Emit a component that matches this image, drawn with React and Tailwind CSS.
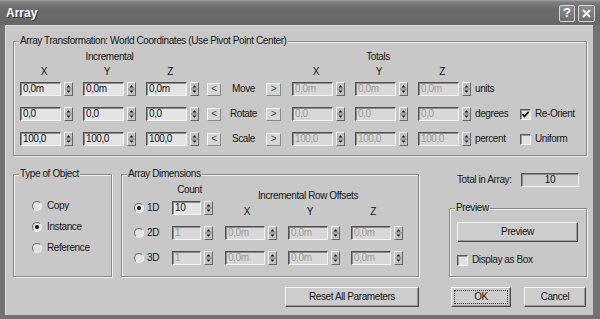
import React from "react";

function Field({ value, w, disabled, center }) {
  return (
    <div
      className={`${w} h-[14px] shrink-0 flex items-center overflow-hidden whitespace-nowrap border border-t-[#505050] border-l-[#505050] border-b-[#f4f4f4] border-r-[#f4f4f4] shadow-[inset_1px_1px_0_#8c8c8c] ${
        center ? "justify-center" : "pl-[2px]"
      } ${disabled ? "bg-[#d8d8d8] text-[#9a9a9a]" : "bg-[#e4e4e4] text-[#111]"}`}
    >
      {value}
    </div>
  );
}

function Spin() {
  return (
    <div className="ml-[3px] w-[9px] h-[14px] shrink-0 bg-[#c2c2c2] border border-t-[#f0f0f0] border-l-[#f0f0f0] border-b-[#666] border-r-[#666]">
      <svg width="7" height="12" viewBox="0 0 7 12" className="block">
        <path d="M1.5 4.6 L3.5 2.2 L5.5 4.6Z" fill="#111" />
        <line x1="0" y1="6" x2="7" y2="6" stroke="#808080" strokeWidth="1" />
        <path d="M1.5 7.4 L5.5 7.4 L3.5 9.8Z" fill="#111" />
      </svg>
    </div>
  );
}

function Unit({ value, disabled, w = "w-[41px]", className = "" }) {
  return (
    <div className={`flex items-center shrink-0 ${className}`}>
      <Field value={value} w={w} disabled={disabled} />
      <Spin />
    </div>
  );
}

function Radio({ checked }) {
  return (
    <div className="w-[10px] h-[10px] shrink-0 rounded-full bg-[#e2e2e2] border border-t-[#6a6a6a] border-l-[#6a6a6a] border-b-[#f6f6f6] border-r-[#f6f6f6] flex items-center justify-center">
      {checked && <div className="w-[4px] h-[4px] rounded-full bg-[#111]" />}
    </div>
  );
}

function Check({ checked }) {
  return (
    <div className="w-[11px] h-[11px] shrink-0 bg-[#e2e2e2] border border-t-[#5a5a5a] border-l-[#5a5a5a] border-b-[#f6f6f6] border-r-[#f6f6f6] shadow-[inset_1px_1px_0_#9a9a9a]">
      {checked && (
        <svg width="9" height="9" viewBox="0 0 9 9" className="block">
          <path d="M1.5 4.2 L3.5 6.4 L7.6 1.8" fill="none" stroke="#111" strokeWidth="1.7" />
        </svg>
      )}
    </div>
  );
}

function Group({ label, className = "", children }) {
  return (
    <div
      className={`relative shrink-0 border border-[#8a8a8a] shadow-[inset_1px_1px_0_#efefef,1px_1px_0_#efefef] ${className}`}
    >
      <span className="absolute -top-[7px] left-[5px] px-[1px] bg-[#c8c8c8] leading-[12px] whitespace-nowrap">
        {label}
      </span>
      {children}
    </div>
  );
}

function ArrowBtn({ children, className = "" }) {
  return (
    <div
      className={`h-[13px] shrink-0 flex items-center justify-center bg-[#d6d6d6] text-[#444] text-[10px] border border-t-[#f2f2f2] border-l-[#f2f2f2] border-b-[#8a8a8a] border-r-[#8a8a8a] ${className}`}
    >
      {children}
    </div>
  );
}

function PushBtn({ children, className = "", focus }) {
  return (
    <div
      className={`shrink-0 flex bg-[#cdcdcd] border border-t-[#f4f4f4] border-l-[#f4f4f4] border-b-[#4a4a4a] border-r-[#4a4a4a] shadow-[inset_-1px_-1px_0_#9a9a9a] ${
        focus ? "p-[2px]" : ""
      } ${className}`}
    >
      <div
        className={`flex-1 flex items-center justify-center ${
          focus ? "border border-dotted border-[#333]" : ""
        }`}
      >
        {children}
      </div>
    </div>
  );
}

function TRow({ inc, tot, label, unit, check, className = "" }) {
  return (
    <div className={`flex items-center h-[14px] ${className}`}>
      <Unit value={inc} />
      <Unit value={inc} className="ml-[10px]" />
      <Unit value={inc} className="ml-[10px]" />
      <ArrowBtn className="ml-[8px] w-[14px]">&lt;</ArrowBtn>
      <div className="w-[45px] text-center">{label}</div>
      <ArrowBtn className="w-[15px]">&gt;</ArrowBtn>
      <Unit value={tot} disabled className="ml-[11px]" />
      <Unit value={tot} disabled className="ml-[10px]" />
      <Unit value={tot} disabled className="ml-[10px]" />
      <div className="ml-[4px] w-[45px]">{unit}</div>
      {check}
    </div>
  );
}

function Letter({ children, className = "", w = "w-[48px]" }) {
  return (
    <div className={`w-[53px] shrink-0 flex ${className}`}>
      <div className={`${w} text-center`}>{children}</div>
    </div>
  );
}

export default function App() {
  return (
    <div className="w-[600px] h-[319px] flex flex-col bg-[#727272] font-['Liberation_Sans',Arial,sans-serif] text-[10px] tracking-[-0.4px] leading-[12px] text-[#161616] overflow-hidden">
      {/* Title bar */}
      <div className="h-[25px] shrink-0 flex items-center pl-[6px] pr-[5px] bg-[linear-gradient(#a2a2a2_0px,#7e7e7e_2px,#6c6c6c_9px,#676767_25px)]">
        <span className="text-white font-bold text-[12px] tracking-normal [text-shadow:1px_1px_0_#333]">
          Array
        </span>
        <div className="ml-auto flex gap-[3px] pt-[1px]">
          <div className="w-[16px] h-[17px] rounded-[2px] border border-[#d6d6d6] bg-[linear-gradient(#8e8e8e,#6e6e6e)] flex items-center justify-center text-white font-bold text-[13px] tracking-normal">
            ?
          </div>
          <div className="w-[17px] h-[17px] rounded-[2px] border border-[#d6d6d6] bg-[linear-gradient(#8e8e8e,#6e6e6e)] flex items-center justify-center">
            <svg width="9" height="9" viewBox="0 0 9 9">
              <path d="M1 1 L8 8 M8 1 L1 8" stroke="#fff" strokeWidth="1.8" />
            </svg>
          </div>
        </div>
      </div>

      {/* Body */}
      <div className="flex-1 flex flex-col ml-[5px] mr-[7px] mb-[4px] bg-[#c8c8c8] pl-[8px] pr-[6px] pt-[16px] shadow-[inset_1px_1px_0_#dcdcdc]">
        {/* Array Transformation */}
        <Group
          label="Array Transformation: World Coordinates (Use Pivot Point Center)"
          className="h-[115px] pl-[6px] pt-[9px]"
        >
          <div className="flex h-[12px]">
            <div className="w-[63px] shrink-0" />
            <div className="w-[53px] shrink-0 flex justify-center whitespace-nowrap">Incremental</div>
            <div className="w-[219px] shrink-0" />
            <div className="w-[46px] shrink-0 flex justify-center">Totals</div>
          </div>
          <div className="flex h-[12px] mt-[3px]">
            <Letter>X</Letter>
            <Letter className="ml-[10px]">Y</Letter>
            <Letter className="ml-[10px]">Z</Letter>
            <Letter className="ml-[93px]">X</Letter>
            <Letter className="ml-[10px]">Y</Letter>
            <Letter className="ml-[10px]">Z</Letter>
          </div>
          <TRow inc="0,0m" tot="0,0m" label="Move" unit="units" className="mt-[4px]" />
          <TRow
            inc="0,0"
            tot="0,0"
            label="Rotate"
            unit="degrees"
            className="mt-[11px]"
            check={
              <div className="flex items-center gap-[4px]">
                <Check checked />
                <span>Re-Orient</span>
              </div>
            }
          />
          <TRow
            inc="100,0"
            tot="100,0"
            label="Scale"
            unit="percent"
            className="mt-[11px]"
            check={
              <div className="flex items-center gap-[4px]">
                <Check />
                <span>Uniform</span>
              </div>
            }
          />
        </Group>

        {/* Lower section */}
        <div className="flex mt-[17px] h-[104px] shrink-0">
          <Group label="Type of Object" className="w-[99px] h-[103px] mt-[1px] pl-[18px] pt-[25px]">
            <div className="flex flex-col gap-[9px]">
              {[
                ["Copy", false],
                ["Instance", true],
                ["Reference", false],
              ].map(([t, c]) => (
                <div key={t} className="flex items-center h-[12px] gap-[5px]">
                  <Radio checked={c} />
                  <span>{t}</span>
                </div>
              ))}
            </div>
          </Group>

          <Group label="Array Dimensions" className="ml-[9px] w-[298px] h-[103px] mt-[1px] pl-[12px] flex">
            <div className="flex flex-col pt-[9px]">
              <div className="h-[12px] flex">
                <div className="w-[38px]" />
                <div className="w-[35px] text-center">Count</div>
              </div>
              {[
                ["1D", "10", true, "mt-[5px]"],
                ["2D", "1", false, "mt-[11px]"],
                ["3D", "1", false, "mt-[11px]"],
              ].map(([t, v, on, m]) => (
                <div key={t} className={`flex items-center h-[14px] ${m}`}>
                  <Radio checked={on} />
                  <span className="ml-[3px] w-[25px]">{t}</span>
                  <Unit value={v} disabled={!on} w="w-[29px]" />
                </div>
              ))}
            </div>
            <div className="flex flex-col pt-[15px] ml-[12px]">
              <div className="h-[12px] w-[166px] text-center whitespace-nowrap">Incremental Row Offsets</div>
              <div className="flex h-[12px] mt-[4px]">
                <Letter w="w-[44px]">X</Letter>
                <Letter w="w-[44px]" className="ml-[10px]">Y</Letter>
                <Letter w="w-[44px]" className="ml-[10px]">Z</Letter>
              </div>
              {["mt-[8px]", "mt-[11px]"].map((m) => (
                <div key={m} className={`flex items-center h-[14px] ${m}`}>
                  <Unit value="0,0m" disabled w="w-[40px]" />
                  <Unit value="0,0m" disabled w="w-[40px]" className="ml-[11px]" />
                  <Unit value="0,0m" disabled w="w-[40px]" className="ml-[11px]" />
                </div>
              ))}
            </div>
          </Group>

          <div className="ml-[30px] w-[138px] shrink-0 flex flex-col">
            <div className="flex items-center h-[14px] pl-[8px]">
              <span className="w-[64px] whitespace-nowrap">Total in Array:</span>
              <div className="w-[58px] h-[14px] flex items-center justify-center bg-[#cccccc] text-[#111] border border-t-[#555] border-l-[#555] border-b-[#f4f4f4] border-r-[#f4f4f4] shadow-[inset_1px_1px_0_#8c8c8c]">
                10
              </div>
            </div>
            <Group label="Preview" className="mt-[21px] h-[69px] pl-[7px] pt-[13px]">
              <PushBtn className="w-[121px] h-[20px]">Preview</PushBtn>
              <div className="flex items-center gap-[4px] mt-[12px] h-[12px]">
                <Check />
                <span>Display as Box</span>
              </div>
            </Group>
          </div>
        </div>

        {/* Buttons */}
        <div className="flex justify-end mt-[10px] h-[20px] shrink-0 pr-[1px]">
          <PushBtn className="w-[134px]">Reset All Parameters</PushBtn>
          <PushBtn focus className="ml-[32px] w-[60px]">
            OK
          </PushBtn>
          <PushBtn className="ml-[13px] w-[62px]">Cancel</PushBtn>
        </div>
      </div>
    </div>
  );
}
